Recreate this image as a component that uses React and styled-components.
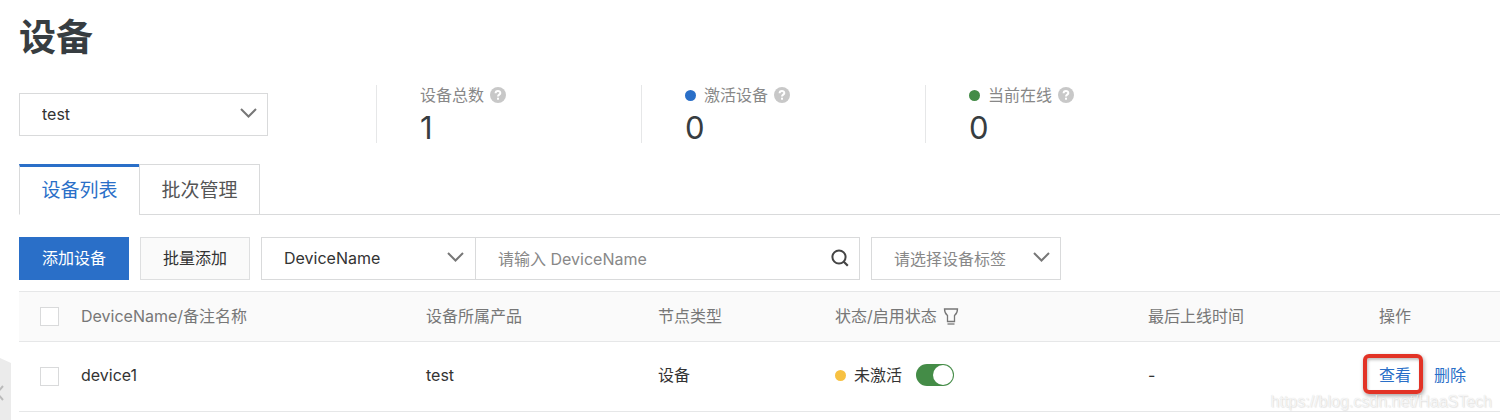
import React, { useState } from "react";
import styled, { createGlobalStyle } from "styled-components";

const GlobalStyle = createGlobalStyle`
  *, *::before, *::after { box-sizing: border-box; }
  body {
    margin: 0;
    background: #fff;
    color: #333;
    font-family: Inter, "Noto Sans CJK SC", sans-serif;
    font-size: 16px;
    line-height: 24px;
  }
  button, input, select { font: inherit; color: inherit; }
`;

const Page = styled.main`
  position: relative;
  padding: 10px 0 8px 19px;
  overflow: hidden;
`;

const Title = styled.h1`
  margin: 0;
  font-size: 37px;
  line-height: 56px;
  font-weight: 700;
  color: #373d41;
`;

const Summary = styled.section`
  display: flex;
  align-items: flex-start;
  margin-top: 19px;
`;

const ProductPicker = styled.div`
  width: 249px;
  margin: 8px 108px 0 0;
`;

const SelectWrap = styled.div`
  position: relative;
  width: ${(p) => p.$width || "100%"};
  flex: none;
`;

const SelectBox = styled.select`
  display: block;
  appearance: none;
  width: 100%;
  height: 43px;
  margin: 0;
  padding: ${(p) => (p.$muted ? "0 40px 0 22px" : "0 40px 2px 22px")};
  border: 1px solid #d9dadb;
  border-right-width: ${(p) => (p.$joined ? 0 : "1px")};
  border-radius: 0;
  background: #fff;
  color: ${(p) => (p.$muted ? "#888" : "#333")};
  outline: none;
`;

const Chevron = styled.svg`
  position: absolute;
  right: 11px;
  top: 14px;
  width: 17px;
  height: 12px;
  pointer-events: none;
`;

const Stat = styled.div`
  width: ${(p) => p.$width};
  height: 58px;
  padding-left: 43px;
  border-left: 1px solid #e6e7e8;
`;

const StatLabel = styled.div`
  display: flex;
  align-items: center;
  height: 20px;
  color: #888;
`;

const StatValue = styled.div`
  font-size: 31px;
  line-height: 46px;
  color: #373d41;
`;

const Dot = styled.span`
  flex: none;
  width: 11px;
  height: 11px;
  margin-right: 8px;
  border-radius: 50%;
  background: ${(p) => p.$color};
`;

const Help = styled.svg`
  width: 16px;
  height: 16px;
  margin-left: 6px;
`;

const Tabs = styled.div`
  display: flex;
  margin-top: 21px;
  border-bottom: 1px solid #d9dadb;
`;

const Tab = styled.button`
  width: ${(p) => (p.$active ? "120px" : "121px")};
  height: 51px;
  margin-bottom: -1px;
  padding: ${(p) => (p.$active ? "0" : "2px 0 0")};
  border: 1px solid #d9dadb;
  border-top: ${(p) => (p.$active ? "3px solid #2a6fc8" : "1px solid #d9dadb")};
  border-right-width: ${(p) => (p.$active ? 0 : "1px")};
  border-bottom-color: ${(p) => (p.$active ? "#fff" : "#d9dadb")};
  background: #fff;
  color: ${(p) => (p.$active ? "#2a6fc8" : "#555")};
  font-size: 19px;
  line-height: 24px;
`;

const Toolbar = styled.div`
  display: flex;
  gap: 11px;
  margin-top: 22px;
`;

const Button = styled.button`
  width: 110px;
  height: 43px;
  padding: 0 0 2px;
  border: 1px solid ${(p) => (p.$primary ? "#2a6fc8" : "#dedfe0")};
  background: ${(p) => (p.$primary ? "#2a6fc8" : "#fafafa")};
  color: ${(p) => (p.$primary ? "#fff" : "#333")};
`;

const SearchGroup = styled.div`
  display: flex;
  width: 599px;
`;

const SearchField = styled.label`
  display: flex;
  flex: 1;
  align-items: center;
  height: 43px;
  padding-right: 10px;
  border: 1px solid #d9dadb;
`;

const SearchInput = styled.input`
  flex: 1;
  min-width: 0;
  padding: 0 0 0 22px;
  border: 0;
  outline: none;
  background: transparent;
  &::placeholder { color: #888; opacity: 1; }
`;

const SearchIcon = styled.svg`
  width: 18px;
  height: 18px;
  margin-bottom: 2px;
`;

const Table = styled.table`
  width: 100%;
  margin-top: 11px;
  table-layout: fixed;
  border-collapse: collapse;
`;

const HeadCell = styled.th`
  height: 50px;
  padding: ${(p) => (p.$check ? "0" : "0 0 2px")};
  border-top: 1px solid #e6e7e8;
  border-bottom: 1px solid #e6e7e8;
  background: #fafafa;
  color: #777;
  font-weight: 400;
  text-align: left;
  white-space: nowrap;
`;

const Cell = styled.td`
  height: 70px;
  padding: ${(p) => (p.$check ? "0" : "0 0 3px")};
  border-bottom: 1px solid #e6e7e8;
  white-space: nowrap;
`;

const Check = styled.input`
  display: block;
  appearance: none;
  width: 19px;
  height: 19px;
  margin: 0 0 0 21px;
  border: 1px solid #d9dadb;
  background: #fff;
  &:checked { background: #2a6fc8; }
`;

const Inline = styled.div`
  display: flex;
  align-items: center;
`;

const FilterIcon = styled.svg`
  width: 16px;
  height: 18px;
  margin-left: 6px;
`;

const Switch = styled.input`
  appearance: none;
  display: flex;
  align-items: center;
  justify-content: ${(p) => (p.checked ? "flex-end" : "flex-start")};
  width: 38px;
  height: 22px;
  margin: 0 0 0 14px;
  padding: 1px;
  border-radius: 11px;
  background: ${(p) => (p.checked ? "#448c47" : "#ccc")};
  &::before {
    content: "";
    width: 20px;
    height: 20px;
    border-radius: 50%;
    background: #fff;
  }
`;

const Actions = styled.div`
  display: flex;
  gap: 23px;
`;

const ActionLink = styled.a`
  position: relative;
  color: #2a6fc8;
  text-decoration: none;
`;

const Highlight = styled.span`
  position: absolute;
  inset: -9px -12px -7px -16px;
  border: 4px solid #e23326;
  border-radius: 6px;
  box-shadow: 1px 2px 4px rgba(0, 0, 0, 0.35), inset 1px 2px 3px rgba(0, 0, 0, 0.25);
  pointer-events: none;
`;

const SideHandle = styled.button`
  position: absolute;
  left: 0;
  top: 358px;
  width: 11px;
  height: 62px;
  padding: 0;
  border: 0;
  background: #ebebeb;
  clip-path: polygon(0 0, 100% 5px, 100% 100%, 0 100%);
`;

const HandleArrow = styled.svg`
  display: block;
  width: 11px;
  height: 62px;
`;

const Watermark = styled.div`
  position: absolute;
  right: 8px;
  bottom: 6px;
  color: rgba(255, 255, 255, 0.75);
  font-family: "Liberation Sans", Arial, sans-serif;
  line-height: 24px;
  text-shadow: 0 0 1px rgba(0, 0, 0, 0.16), 1px 1px 1px rgba(0, 0, 0, 0.08);
  pointer-events: none;
`;

function Arrow() {
  return (
    <Chevron viewBox="0 0 17 12" aria-hidden="true">
      <path d="M1 2l7.5 7.5L16 2" fill="none" stroke="#777" strokeWidth="2" />
    </Chevron>
  );
}

function Dropdown({ label, width, joined, muted, options }) {
  return (
    <SelectWrap $width={width}>
      <SelectBox aria-label={label} $joined={joined} $muted={muted}>
        {options.map((o) => <option key={o}>{o}</option>)}
      </SelectBox>
      <Arrow />
    </SelectWrap>
  );
}

function HelpMark() {
  return (
    <Help viewBox="0 0 16 16" aria-hidden="true">
      <circle cx="8" cy="8" r="8" fill="#c8c8c8" />
      <path d="M5.6 6.3C5.6 3 10.4 3.2 10.3 6.1C10.2 7.7 8 7.6 8 9.6" fill="none" stroke="#fff" strokeWidth="2" />
      <rect x="7" y="10.7" width="2" height="2" fill="#fff" />
    </Help>
  );
}

const stats = [
  { label: "设备总数", value: 1, width: "265px" },
  { label: "激活设备", value: 0, width: "284px", color: "#2a6fc8" },
  { label: "当前在线", value: 0, width: "284px", color: "#448c47" },
];

const columns = [62, 345, 232, 177, 313, 231, 121];

export default function App() {
  const [tab, setTab] = useState(0);
  const [enabled, setEnabled] = useState(true);
  return (
    <>
      <GlobalStyle />
      <Page>
        <Title>设备</Title>
        <Summary>
          <ProductPicker>
            <Dropdown label="产品" options={["test"]} />
          </ProductPicker>
          {stats.map((s) => (
            <Stat key={s.label} $width={s.width}>
              <StatLabel>
                {s.color && <Dot $color={s.color} />}
                {s.label}
                <HelpMark />
              </StatLabel>
              <StatValue>{s.value}</StatValue>
            </Stat>
          ))}
        </Summary>
        <Tabs role="tablist">
          {["设备列表", "批次管理"].map((t, i) => (
            <Tab key={t} role="tab" aria-selected={tab === i} $active={tab === i} onClick={() => setTab(i)}>
              {t}
            </Tab>
          ))}
        </Tabs>
        <Toolbar>
          <Button $primary>添加设备</Button>
          <Button>批量添加</Button>
          <SearchGroup>
            <Dropdown label="搜索字段" width="214px" joined options={["DeviceName"]} />
            <SearchField>
              <SearchInput aria-label="搜索" placeholder="请输入 DeviceName" />
              <SearchIcon viewBox="0 0 18 18" aria-hidden="true">
                <circle cx="8" cy="8" r="6.6" fill="none" stroke="#444" strokeWidth="2" />
                <path d="M12.5 12.5l4.3 4.3" stroke="#444" strokeWidth="2.2" />
              </SearchIcon>
            </SearchField>
          </SearchGroup>
          <Dropdown label="设备标签" width="190px" muted options={["请选择设备标签"]} />
        </Toolbar>
        <Table>
          <colgroup>
            {columns.map((w, i) => <col key={i} width={w} />)}
          </colgroup>
          <thead>
            <tr>
              <HeadCell $check><Check type="checkbox" aria-label="全选" /></HeadCell>
              <HeadCell>DeviceName/备注名称</HeadCell>
              <HeadCell>设备所属产品</HeadCell>
              <HeadCell>节点类型</HeadCell>
              <HeadCell>
                <Inline>
                  状态/启用状态
                  <FilterIcon viewBox="0 0 16 18" fill="none" stroke="#777" strokeWidth="1.3" aria-hidden="true">
                    <path d="M1.5 2h13c0 3.2-.8 4.8-3 6.600v5.900h-7V8.600C2.300 6.800 1.500 5.200 1.500 2z" />
                    <path d="M4.5 17h7" />
                  </FilterIcon>
                </Inline>
              </HeadCell>
              <HeadCell>最后上线时间</HeadCell>
              <HeadCell>操作</HeadCell>
            </tr>
          </thead>
          <tbody>
            <tr>
              <Cell $check><Check type="checkbox" aria-label="选择 device1" /></Cell>
              <Cell>device1</Cell>
              <Cell>test</Cell>
              <Cell>设备</Cell>
              <Cell>
                <Inline>
                  <Dot $color="#f7c142" />
                  未激活
                  <Switch
                    type="checkbox"
                    role="switch"
                    aria-label="启用状态"
                    checked={enabled}
                    onChange={(e) => setEnabled(e.target.checked)}
                  />
                </Inline>
              </Cell>
              <Cell>-</Cell>
              <Cell>
                <Actions>
                  <ActionLink href="#view">查看<Highlight /></ActionLink>
                  <ActionLink href="#delete">删除</ActionLink>
                </Actions>
              </Cell>
            </tr>
          </tbody>
        </Table>
        <SideHandle aria-label="收起侧栏">
          <HandleArrow viewBox="0 0 11 62" fill="none" stroke="#bbb" strokeWidth="2" aria-hidden="true">
            <path d="M3 28l-6 7 6 7" />
          </HandleArrow>
        </SideHandle>
        <Watermark>https://blog.csdn.net/HaaSTech</Watermark>
      </Page>
    </>
  );
}
